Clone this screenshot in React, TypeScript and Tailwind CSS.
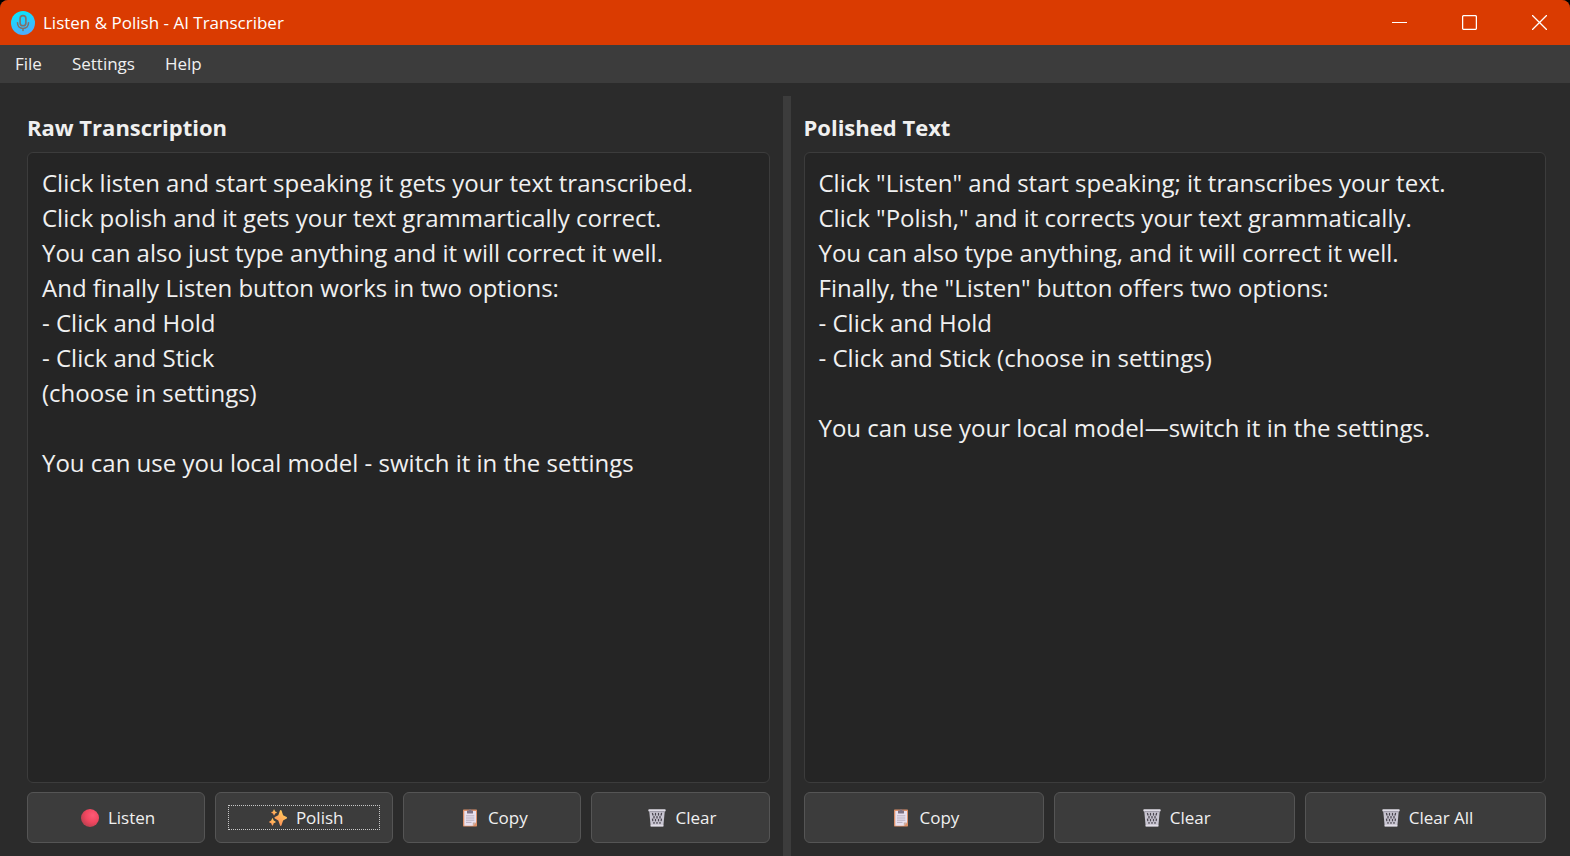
import { useState } from "react";
import type { ReactNode } from "react";

const RAW_TEXT = `Click listen and start speaking it gets your text transcribed.
Click polish and it gets your text grammartically correct.
You can also just type anything and it will correct it well.
And finally Listen button works in two options:
- Click and Hold
- Click and Stick
(choose in settings)

You can use you local model - switch it in the settings`;

const POLISHED_TEXT = `Click "Listen" and start speaking; it transcribes your text.
Click "Polish," and it corrects your text grammatically.
You can also type anything, and it will correct it well.
Finally, the "Listen" button offers two options:
- Click and Hold
- Click and Stick (choose in settings)

You can use your local model—switch it in the settings.`;

function AppLogo() {
  return (
    <svg viewBox="0 0 24 24" className="size-6" aria-hidden="true">
      <defs>
        <linearGradient id="logo" x1="0.2" y1="0" x2="0.5" y2="1">
          <stop offset="0" stopColor="#05e9fd" />
          <stop offset="1" stopColor="#4facfe" />
        </linearGradient>
      </defs>
      <circle cx="12" cy="12" r="12" fill="url(#logo)" />
      <g fill="none" stroke="#80706a" strokeWidth="1.6" strokeLinecap="round">
        <rect x="9.1" y="4.6" width="5.8" height="10.2" rx="2.9" />
        <path d="M6.500 11.800c0 3.400 2.300 5.700 5.500 5.700s5.500-2.300 5.500-5.700M12 17.500v2" />
      </g>
    </svg>
  );
}

function RedDot() {
  return (
    <svg viewBox="0 0 18 18" className="size-[18px]" aria-hidden="true">
      <defs>
        <radialGradient id="dot" cx="0.65" cy="0.35" r="0.72">
          <stop offset="0" stopColor="#ff5a76" />
          <stop offset="0.55" stopColor="#f0465f" />
          <stop offset="1" stopColor="#b8404f" />
        </radialGradient>
      </defs>
      <circle cx="9" cy="9" r="9" fill="url(#dot)" />
    </svg>
  );
}

function Sparkles() {
  return (
    <svg viewBox="0 0 18 18" className="size-[18px]" aria-hidden="true">
      <defs>
        <linearGradient id="spark" x1="0" y1="1" x2="0.7" y2="0">
          <stop offset="0" stopColor="#ff8257" />
          <stop offset="1" stopColor="#ffcf5c" />
        </linearGradient>
      </defs>
      <g fill="url(#spark)">
        <path d="M11 1.600c.3-.9 1.200-.9 1.500 0l1.600 4.700 3.500 1.800c.6.3.6 1.200 0 1.500l-3.500 1.800-1.600 4.900c-.3.9-1.200.9-1.500 0l-1.700-4.900-3.400-1.800c-.6-.3-.6-1.200 0-1.500l3.400-1.800z" />
        <path d="M3 9.800c.2-.6.800-.6 1 0l.7 1.800 1.700.8c.5.200.5.900 0 1.100l-1.700.8-.7 1.900c-.2.500-.8.500-1 0l-.8-1.900-1.700-.8c-.5-.2-.5-.9 0-1.100l1.700-.8z" />
        <path d="M4.600.900c.2-.4.700-.4.900 0l.6 1.500 1.400.6c.4.200.4.700 0 .9l-1.400.7-.6 1.400c-.2.500-.7.500-.9 0L4 4.600l-1.400-.7c-.4-.2-.4-.7 0-.9L4 2.400z" />
      </g>
    </svg>
  );
}

function Clipboard() {
  return (
    <svg viewBox="0 0 18 18" className="size-[18px]" aria-hidden="true">
      <rect x="2" y="0.500" width="14" height="17" rx="0.700" fill="#dd9068" />
      <path d="M3.300 2h11.700v11.500l-3 3.300H3.300z" fill="#e8e0ee" />
      <path d="M15 13.500h-3.200v3.300z" fill="#c9a99f" />
      <path d="M6 1.400h1.700a1.400 1.400 0 0 1 2.700 0H12V4a.5.5 0 0 1-.5.5h-5A.5.5 0 0 1 6 4z" fill="#7d7285" />
      <path d="M5 6.800h8.300M5 9h8.300M5 11.200h8.300M5 13.400h5.500" stroke="#b3a9ba" strokeWidth="0.900" />
    </svg>
  );
}

function Bin() {
  return (
    <svg viewBox="0 0 18 18" className="size-[18px]" aria-hidden="true">
      <path d="M1.200 1.500h15.600L15.300 17.500H2.700z" fill="#c9c6d2" />
      <g stroke="#4a4650" strokeWidth="1.300" strokeLinecap="round">
        <path d="M4.500 4.500l.5 1.500M7.500 4.500v1.500M10.500 4.500v1.500M13.500 4.500l-.4 1.500M6 7.500v1.500M9 7.500v1.500M12 7.500v1.500M4.500 10.200l.3 1.300M7.500 10.500v1.300M10.500 10.500v1.300M13.400 10.200l-.2 1.300M6 13.300v1M9 13.300v1M12 13.300v1" />
      </g>
      <rect x="0.300" y="0.200" width="17.400" height="2.200" rx="0.900" fill="#dedbe5" />
      <path d="M1.500 2.700h15" stroke="#87828f" strokeWidth="0.800" />
      <path d="M2.700 16.600h12.600" stroke="#e2dfe8" strokeWidth="1.500" />
    </svg>
  );
}

function ActionButton({ icon, children, onClick, focused = false }: {
  icon: ReactNode;
  children: ReactNode;
  onClick?: () => void;
  focused?: boolean;
}) {
  return (
    <button
      type="button"
      onClick={onClick}
      className="flex h-[51px] min-w-0 flex-1 rounded-md border border-[#555555] bg-[#3c3c3c] p-3 text-[17px] leading-6 text-[#f0f0f0] hover:bg-[#484848]"
    >
      <span
        className={
          focused
            ? "flex h-full w-full items-center justify-center gap-[9px] border border-dotted border-[#c8c8c8] pl-1"
            : "flex h-full w-full items-center justify-center gap-[9px] border border-transparent pl-1"
        }
      >
        {icon}
        <span>{children}</span>
      </span>
    </button>
  );
}

function Panel({ id, title, value, onChange, children }: {
  id: string;
  title: string;
  value: string;
  onChange: (value: string) => void;
  children: ReactNode;
}) {
  return (
    <section className="flex min-w-0 flex-1 flex-col px-[13px] pt-[15px] pb-[13px]">
      <label htmlFor={id} className="mb-[9px] text-[22px] leading-8 font-bold">
        {title}
      </label>
      <textarea
        id={id}
        value={value}
        spellCheck={false}
        onChange={(event) => onChange(event.target.value)}
        className="min-h-0 w-full flex-1 resize-none rounded-md border border-[#3c3c3c] bg-[#252525] px-[14px] py-3 text-[24px] leading-[35px] text-[#f0f0f0] outline-none"
      />
      <div className="mt-[9px] flex gap-[10px]">{children}</div>
    </section>
  );
}

export default function App() {
  const [raw, setRaw] = useState(RAW_TEXT);
  const [polished, setPolished] = useState(POLISHED_TEXT);
  const copy = (text: string) => void navigator.clipboard?.writeText(text);

  return (
    <div className="h-screen bg-black font-['Open_Sans','Noto_Sans',sans-serif] text-[#f0f0f0]">
      <div className="flex h-full flex-col overflow-hidden rounded-t-lg bg-[#2b2b2b]">
        <header className="flex h-[45px] shrink-0 items-center bg-[#da3b01] pl-[11px] text-white">
          <AppLogo />
          <h1 className="ml-2 text-[17px] leading-6">Listen &amp; Polish - AI Transcriber</h1>
          <div className="ml-auto flex h-full">
            <button type="button" aria-label="Minimize" className="flex w-[70px] items-center justify-center">
              <svg viewBox="0 0 15 15" className="size-[15px]" fill="none" stroke="currentColor">
                <path d="M0 7.500h15" />
              </svg>
            </button>
            <button type="button" aria-label="Maximize" className="flex w-[70px] items-center justify-center">
              <svg viewBox="0 0 15 15" className="size-[15px]" fill="none" stroke="currentColor">
                <rect x="0.600" y="0.600" width="13.800" height="13.800" rx="1.200" strokeWidth="1.300" />
              </svg>
            </button>
            <button type="button" aria-label="Close" className="flex w-[66px] items-center justify-center pl-1">
              <svg viewBox="0 0 15 15" className="size-[15px]" fill="none" stroke="currentColor" strokeWidth="1.300">
                <path d="M0 0l15 15M15 0L0 15" />
              </svg>
            </button>
          </div>
        </header>
        <nav className="flex h-[38px] shrink-0 items-center bg-[#3c3c3c] text-[17px] leading-6">
          <button type="button" className="px-[15px]">File</button>
          <button type="button" className="px-[15px]">Settings</button>
          <button type="button" className="px-[15px]">Help</button>
        </nav>
        <main className="flex min-h-0 flex-1 pt-[13px] pr-[11px] pl-[14px]">
          <Panel id="raw" title="Raw Transcription" value={raw} onChange={setRaw}>
            <ActionButton icon={<RedDot />}>Listen</ActionButton>
            <ActionButton icon={<Sparkles />} focused>Polish</ActionButton>
            <ActionButton icon={<Clipboard />} onClick={() => copy(raw)}>Copy</ActionButton>
            <ActionButton icon={<Bin />} onClick={() => setRaw("")}>Clear</ActionButton>
          </Panel>
          <div className="w-2 shrink-0 bg-[#3c3c3c]" />
          <Panel id="polished" title="Polished Text" value={polished} onChange={setPolished}>
            <ActionButton icon={<Clipboard />} onClick={() => copy(polished)}>Copy</ActionButton>
            <ActionButton icon={<Bin />} onClick={() => setPolished("")}>Clear</ActionButton>
            <ActionButton
              icon={<Bin />}
              onClick={() => {
                setRaw("");
                setPolished("");
              }}
            >
              Clear All
            </ActionButton>
          </Panel>
        </main>
      </div>
    </div>
  );
}
